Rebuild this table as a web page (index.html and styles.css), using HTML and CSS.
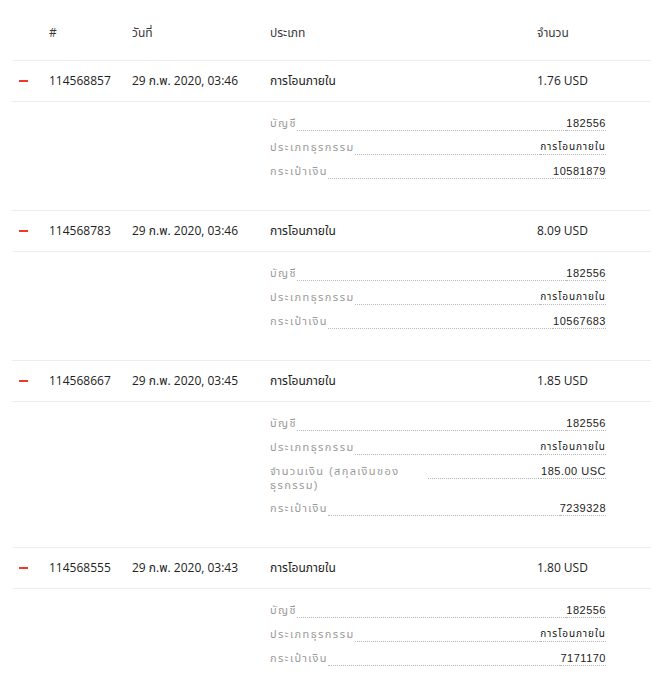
FILE: index.html
```html
<!DOCTYPE html>
<html lang="th">
<head>
<meta charset="utf-8">
<title>รายการ</title>
<link rel="stylesheet" href="styles.css">
</head>
<body>
<div class="table">
  <div class="row head">
    <div class="c-toggle"></div>
    <div class="c-id">#</div>
    <div class="c-date">วันที่</div>
    <div class="c-type">ประเภท</div>
    <div class="c-amount">จำนวน</div>
  </div>

  <div class="group">
    <div class="row main">
      <div class="c-toggle"><span class="dash"></span></div>
      <div class="c-id">114568857</div>
      <div class="c-date">29 ก.พ. 2020, 03:46</div>
      <div class="c-type">การโอนภายใน</div>
      <div class="c-amount">1.76 USD</div>
    </div>
    <div class="details">
      <div class="d-row"><span class="d-label">บัญชี</span><span class="d-fill"></span><span class="d-value">182556</span></div>
      <div class="d-row"><span class="d-label">ประเภทธุรกรรม</span><span class="d-fill"></span><span class="d-value th">การโอนภายใน</span></div>
      <div class="d-row"><span class="d-label">กระเป๋าเงิน</span><span class="d-fill"></span><span class="d-value">10581879</span></div>
    </div>
  </div>

  <div class="group">
    <div class="row main">
      <div class="c-toggle"><span class="dash"></span></div>
      <div class="c-id">114568783</div>
      <div class="c-date">29 ก.พ. 2020, 03:46</div>
      <div class="c-type">การโอนภายใน</div>
      <div class="c-amount">8.09 USD</div>
    </div>
    <div class="details">
      <div class="d-row"><span class="d-label">บัญชี</span><span class="d-fill"></span><span class="d-value">182556</span></div>
      <div class="d-row"><span class="d-label">ประเภทธุรกรรม</span><span class="d-fill"></span><span class="d-value th">การโอนภายใน</span></div>
      <div class="d-row"><span class="d-label">กระเป๋าเงิน</span><span class="d-fill"></span><span class="d-value">10567683</span></div>
    </div>
  </div>

  <div class="group">
    <div class="row main">
      <div class="c-toggle"><span class="dash"></span></div>
      <div class="c-id">114568667</div>
      <div class="c-date">29 ก.พ. 2020, 03:45</div>
      <div class="c-type">การโอนภายใน</div>
      <div class="c-amount">1.85 USD</div>
    </div>
    <div class="details">
      <div class="d-row"><span class="d-label">บัญชี</span><span class="d-fill"></span><span class="d-value">182556</span></div>
      <div class="d-row"><span class="d-label">ประเภทธุรกรรม</span><span class="d-fill"></span><span class="d-value th">การโอนภายใน</span></div>
      <div class="d-row"><span class="d-label wrap">จำนวนเงิน (สกุลเงินของ<wbr>ธุรกรรม)</span><span class="d-fill"></span><span class="d-value">185.00 USC</span></div>
      <div class="d-row"><span class="d-label">กระเป๋าเงิน</span><span class="d-fill"></span><span class="d-value">7239328</span></div>
    </div>
  </div>

  <div class="group">
    <div class="row main">
      <div class="c-toggle"><span class="dash"></span></div>
      <div class="c-id">114568555</div>
      <div class="c-date">29 ก.พ. 2020, 03:43</div>
      <div class="c-type">การโอนภายใน</div>
      <div class="c-amount">1.80 USD</div>
    </div>
    <div class="details">
      <div class="d-row"><span class="d-label">บัญชี</span><span class="d-fill"></span><span class="d-value">182556</span></div>
      <div class="d-row"><span class="d-label">ประเภทธุรกรรม</span><span class="d-fill"></span><span class="d-value th">การโอนภายใน</span></div>
      <div class="d-row"><span class="d-label">กระเป๋าเงิน</span><span class="d-fill"></span><span class="d-value">7171170</span></div>
    </div>
  </div>
</div>
</body>
</html>
```
FILE: styles.css
```css
html, body {
  margin: 0;
  padding: 0;
  background: #ffffff;
}
body {
  font-family: "Open Sans", "Noto Sans", "Noto Sans Thai", sans-serif;
  font-size: 12px;
  color: #222222;
  overflow: hidden;
}
.table {
  margin-left: 12px;
}
.row {
  display: flex;
  align-items: center;
  line-height: 17px;
}
.head {
  padding: 24px 0 19px;
  color: #3a3a3a;
  border-bottom: 1px solid #ededed;
}
.group + .group {
  border-top: 1px solid #ededed;
}
.main {
  padding: 11px 0 12px;
  border-bottom: 1px solid #ededed;
  font-weight: 400;
}
.c-toggle {
  width: 37px;
  display: flex;
  align-items: center;
}
.dash {
  display: block;
  width: 9px;
  height: 2px;
  margin-left: 7px;
  background: #f2382b;
}
.c-id { width: 83px; }
.c-date { width: 138px; }
.c-type { width: 267px; }
.c-amount { flex: 1; }

.details {
  margin-left: 258px;
  width: 336px;
  padding: 9px 0 27px;
  font-family: "Liberation Sans", "Noto Sans Thai", sans-serif;
  font-size: 11px;
}
.d-row {
  display: flex;
  align-items: flex-start;
  padding: 5px 0 4px;
  line-height: 14px;
}
.d-label {
  color: #999999;
  letter-spacing: 1.4px;
  max-width: 158px;
  font-size: 11px;
}
.d-label.wrap {
  width: 158px;
  line-height: 14px;
}
.d-fill {
  flex: 1;
  height: 14px;
  border-bottom: 1px dotted #b8b8b8;
}
.d-value {
  height: 14px;
  color: #222222;
  letter-spacing: 0.5px;
  border-bottom: 1px dotted #b8b8b8;
  white-space: nowrap;
}
.d-value.th {
  letter-spacing: 1px;
  font-size: 10px;
  color: #111111;
}
```
